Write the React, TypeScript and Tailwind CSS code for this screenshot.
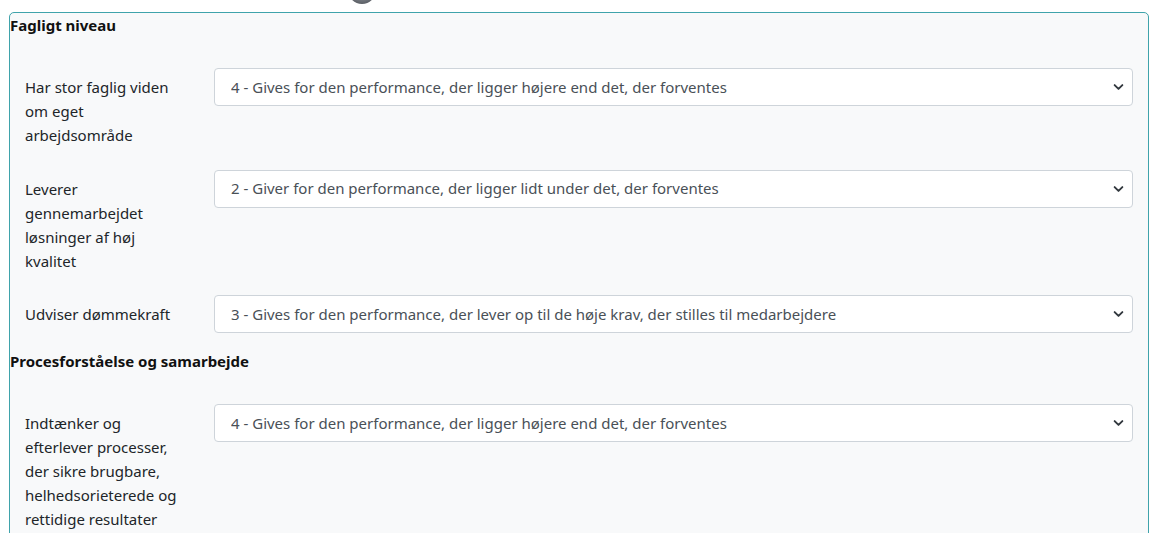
import { ChangeEvent, useState } from 'react';

type Item = { label: string; value: string };
type Section = { title: string; items: Item[] };

const options = [
    '1 - Gives for den performance, der ligger langt under det, der forventes',
    '2 - Giver for den performance, der ligger lidt under det, der forventes',
    '3 - Gives for den performance, der lever op til de høje krav, der stilles til medarbejdere',
    '4 - Gives for den performance, der ligger højere end det, der forventes',
    '5 - Gives for den performance, der ligger langt over det, der forventes',
];

const sections: Section[] = [
    {
        title: 'Fagligt niveau',
        items: [
            { label: 'Har stor faglig viden om eget arbejdsområde', value: options[3] },
            { label: 'Leverer gennemarbejdet løsninger af høj kvalitet', value: options[1] },
            { label: 'Udviser dømmekraft', value: options[2] },
        ],
    },
    {
        title: 'Procesforståelse og samarbejde',
        items: [
            {
                label: 'Indtænker og efterlever processer, der sikre brugbare, helhedsorieterede og rettidige resultater',
                value: options[3],
            },
        ],
    },
];

function Chevron() {
    return (
        <svg className="pointer-events-none absolute right-[9px] top-1/2 -translate-y-1/2" width="11" height="9" viewBox="0 0 16 14">
            <path d="M2 4l6 6 6-6" fill="none" stroke="#343a40" strokeWidth="3" strokeLinecap="round" strokeLinejoin="round" />
        </svg>
    );
}

function RatingRow({ item }: { item: Item }) {
    const [value, setValue] = useState(item.value);

    return (
        <div className="flex items-start mb-4">
            <label className="w-[189px] shrink-0 px-[15px] pt-[7px] pb-[6.5px] text-[15px] leading-6 text-[#212529]">
                {item.label}
            </label>
            <div className="flex-1 pl-[15px] pr-[15px]">
                <div className="relative">
                    <select
                        value={value}
                        onChange={(e: ChangeEvent<HTMLSelectElement>) => setValue(e.target.value)}
                        className="block w-full h-[38px] appearance-none rounded-[4px] border border-[#ced4da] bg-white pl-[16px] pr-8 text-[15px] text-[#495057] outline-none"
                    >
                        {options.map((o) => (
                            <option key={o} value={o}>{o}</option>
                        ))}
                    </select>
                    <Chevron />
                </div>
            </div>
        </div>
    );
}

export default function App() {
    return (
        <div className="min-h-screen bg-white font-['Noto_Sans','Open_Sans',sans-serif]">
            {/* avatar cut off at the top */}
            <div className="h-[12px] overflow-hidden">
                <div className="ml-[348px] -mt-[24px] w-[28px] h-[28px] rounded-full bg-[radial-gradient(circle_at_50%_40%,#d5d8dc_0%,#8a8f96_40%,#3d4046_100%)]" />
            </div>

            <div className="ml-[9px] mr-[5px] rounded-[5px] border border-[#3fa3ab] bg-[#f8f9fa]">
                {sections.map((section) => (
                    <div key={section.title}>
                        <h5 className="text-[15px] leading-6 font-bold text-[#111] mb-[31px]">
                            {section.title}
                        </h5>
                        {section.items.map((item) => (
                            <RatingRow key={item.label} item={item} />
                        ))}
                    </div>
                ))}
            </div>
        </div>
    );
}
